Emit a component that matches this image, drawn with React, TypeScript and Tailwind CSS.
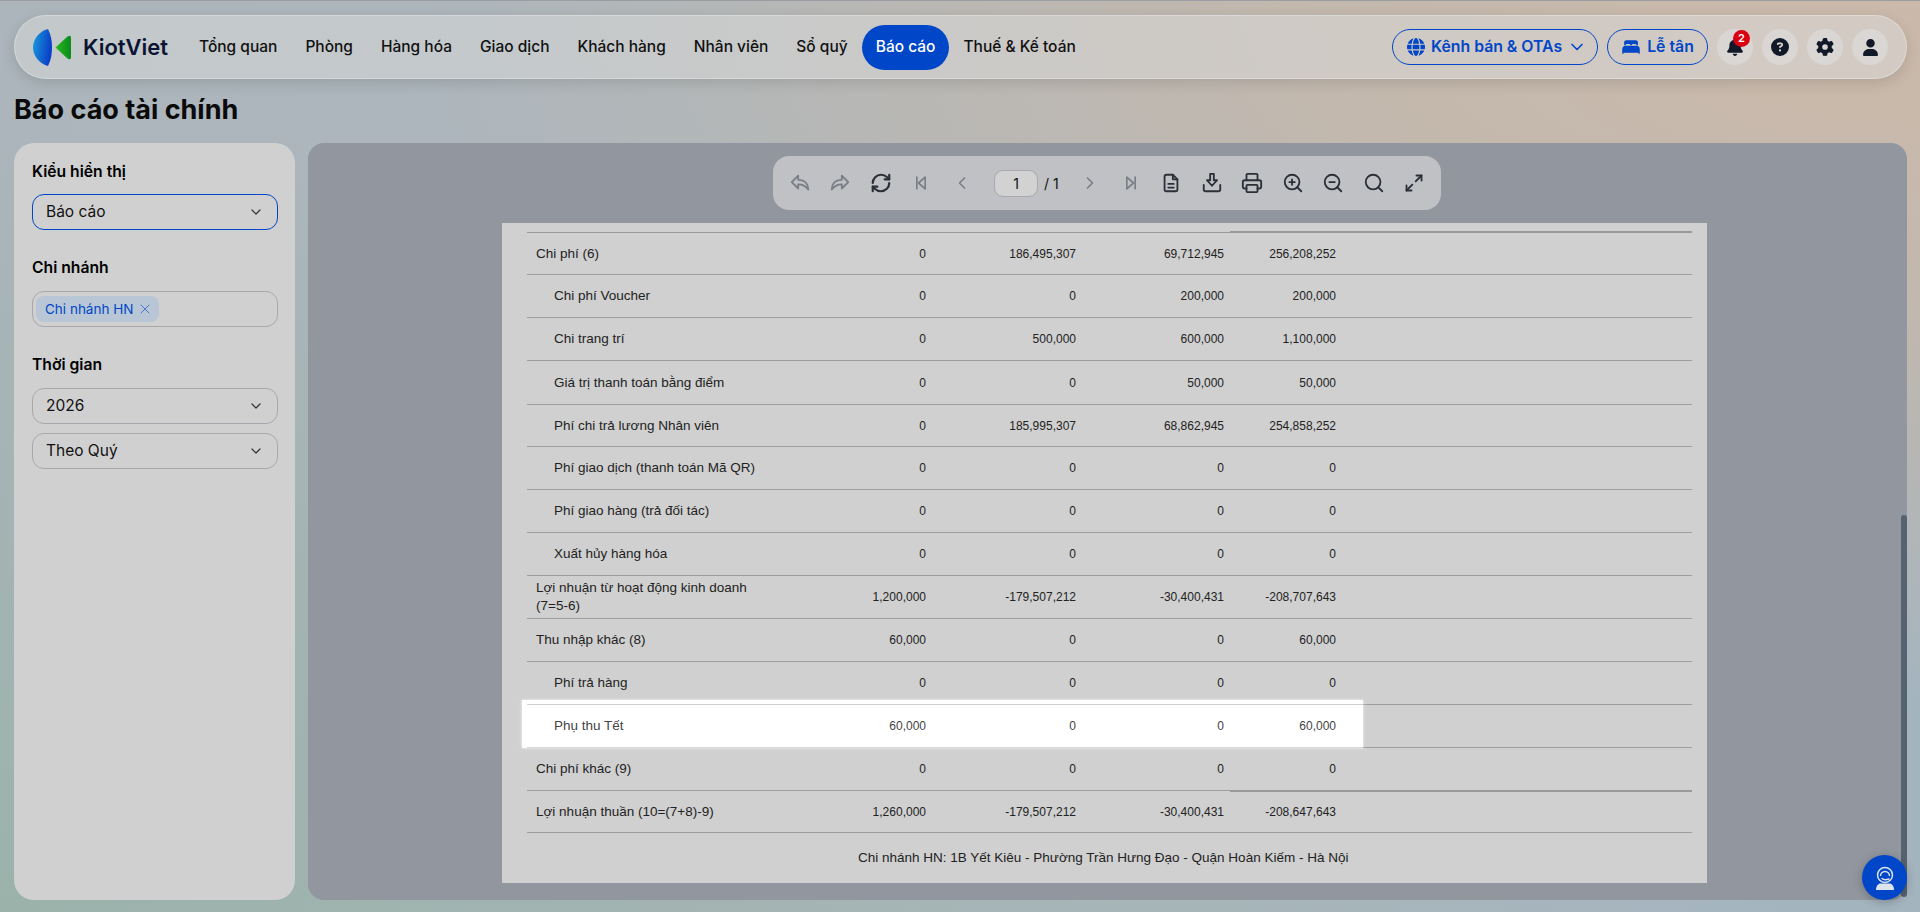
import { ChevronDown, X } from 'lucide-react';
import { FaBell, FaCircleQuestion, FaGear, FaGlobe, FaUser } from 'react-icons/fa6';
import { FiChevronLeft, FiChevronRight } from 'react-icons/fi';
import { IoBed } from 'react-icons/io5';
import { LuMaximize2, LuPrinter, LuRefreshCw, LuSearch, LuZoomIn, LuZoomOut } from 'react-icons/lu';

const nav = ['Tổng quan', 'Phòng', 'Hàng hóa', 'Giao dịch', 'Khách hàng', 'Nhân viên', 'Sổ quỹ'];

type Row = {
  label: string;
  values: string[];
  sub?: boolean;
  h: string;
  hi?: boolean;
  thick?: boolean;
};

const rows: Row[] = [
  { label: 'Chi phí (6)', values: ['0', '186,495,307', '69,712,945', '256,208,252'], h: 'h-[42px]' },
  { label: 'Chi phí Voucher', sub: true, values: ['0', '0', '200,000', '200,000'], h: 'h-[43px]' },
  { label: 'Chi trang trí', sub: true, values: ['0', '500,000', '600,000', '1,100,000'], h: 'h-[43px]' },
  { label: 'Giá trị thanh toán bằng điểm', sub: true, values: ['0', '0', '50,000', '50,000'], h: 'h-[44px]' },
  { label: 'Phí chi trả lương Nhân viên', sub: true, values: ['0', '185,995,307', '68,862,945', '254,858,252'], h: 'h-[42px]' },
  { label: 'Phí giao dịch (thanh toán Mã QR)', sub: true, values: ['0', '0', '0', '0'], h: 'h-[43px]' },
  { label: 'Phí giao hàng (trả đối tác)', sub: true, values: ['0', '0', '0', '0'], h: 'h-[43px]' },
  { label: 'Xuất hủy hàng hóa', sub: true, values: ['0', '0', '0', '0'], h: 'h-[43px]' },
  { label: 'Lợi nhuận từ hoạt động kinh doanh (7=5-6)', values: ['1,200,000', '-179,507,212', '-30,400,431', '-208,707,643'], h: 'h-[43px]' },
  { label: 'Thu nhập khác (8)', values: ['60,000', '0', '0', '60,000'], h: 'h-[43px]' },
  { label: 'Phí trả hàng', sub: true, values: ['0', '0', '0', '0'], h: 'h-[43px]' },
  { label: 'Phụ thu Tết', sub: true, hi: true, values: ['60,000', '0', '0', '60,000'], h: 'h-[43px]' },
  { label: 'Chi phí khác (9)', thick: true, values: ['0', '0', '0', '0'], h: 'h-[43px]' },
  { label: 'Lợi nhuận thuần (10=(7+8)-9)', values: ['1,260,000', '-179,507,212', '-30,400,431', '-208,647,643'], h: 'h-[42px]' },
];

const numCols = ['w-[235px]', 'w-[150px]', 'w-[148px]', 'w-[112px]'];

function KiotVietLogo() {
  return (
    <svg width="38" height="37" viewBox="0 0 38 37" className="shrink-0">
      <defs>
        <linearGradient id="kvBlue" x1="0" y1="0" x2="1" y2="0.25">
          <stop offset="0" stopColor="#1a9ddc" />
          <stop offset="1" stopColor="#0b3fc8" />
        </linearGradient>
        <linearGradient id="kvGreen" x1="0" y1="0" x2="1" y2="0">
          <stop offset="0" stopColor="#2cb81f" />
          <stop offset="1" stopColor="#0a8a1c" />
        </linearGradient>
      </defs>
      <path d="M15 0C5 3 0 11 0 18.500S5 34 15 37C18 31 19 25 19 18.500S18 6 15 0Z" fill="url(#kvBlue)" />
      <path d="M22.500 18.500 34.500 7.500Q38 5.500 38 9V28Q38 31.500 34.500 29.500Z" fill="url(#kvGreen)" />
    </svg>
  );
}

function Select({ value, active }: { value: string; active?: boolean }) {
  return (
    <div
      className={`flex h-9 items-center justify-between rounded-xl border pl-[13px] pr-[13px] text-[15.5px] text-[#111] ${
        active ? 'border-[#0046c8]' : 'border-[#a8a8ae]'
      }`}
    >
      <span>{value}</span>
      <ChevronDown size={16} strokeWidth={1.8} className="text-[#333]" />
    </div>
  );
}

function RoundIcon({ children }: { children: React.ReactNode }) {
  return (
    <div className="relative flex size-9 items-center justify-center rounded-full bg-[#dcdcdc]/70 text-[#111827]">
      {children}
    </div>
  );
}

function ToolIcon({ children, dim }: { children: React.ReactNode; dim?: boolean }) {
  return (
    <div className={`flex w-[40.5px] shrink-0 items-center justify-center ${dim ? 'text-[#7a7e86]' : 'text-[#2b3038]'}`}>
      {children}
    </div>
  );
}

function ToolSvg({ children, size = 22 }: { children: React.ReactNode; size?: number }) {
  return (
    <svg width={size} height={size} viewBox="0 0 24 24" fill="none" stroke="currentColor" strokeWidth="2" strokeLinecap="round" strokeLinejoin="round">
      {children}
    </svg>
  );
}

export default function App() {
  return (
    <div className="flex h-[912px] w-[1920px] flex-col overflow-hidden border-t border-[#9a9ea2] bg-[radial-gradient(ellipse_at_100%_0%,#cbb9aa_0%,#c3b8ad_22%,transparent_55%),radial-gradient(ellipse_at_0%_100%,#9bb2ab_0%,transparent_60%),linear-gradient(100deg,#abb5bb_0%,#aeb7bd_50%,#a3b4bf_100%)] pl-[14px] pr-[13px] pt-[14px] font-['Inter',sans-serif] text-[#111]">
      <header className="flex h-16 shrink-0 items-center rounded-[32px] border border-white/30 bg-[#dcdcdc]/50 pl-[18px] pr-[18px] shadow-[0_4px_14px_rgba(0,0,0,0.12)]">
        <KiotVietLogo />
        <span className="ml-3 text-[22px] font-semibold text-[#0c1433]">KiotViet</span>
        <nav className="ml-[17px] flex items-center text-[15.5px] font-medium text-[#111]">
          {nav.map((n) => (
            <a key={n} className="px-[14px]">
              {n}
            </a>
          ))}
          <a className="flex h-[45px] items-center rounded-full bg-[#0046c8] px-[14px] text-white">Báo cáo</a>
          <a className="px-[14px]">Thuế &amp; Kế toán</a>
        </nav>
        <div className="ml-auto flex items-center gap-[9px]">
          <button className="flex h-9 w-[206px] items-center rounded-full border border-[#0046c8] pl-[14px] text-[15.8px] font-semibold text-[#0046c8]">
            <FaGlobe size={18} />
            <span className="ml-[6px]">Kênh bán &amp; OTAs</span>
            <ChevronDown size={20} strokeWidth={2} className="ml-[5px]" />
          </button>
          <button className="flex h-9 w-[101px] items-center justify-center gap-[6px] rounded-full border border-[#0046c8] text-[15.8px] font-semibold text-[#0046c8]">
            <IoBed size={20} />
            Lễ tân
          </button>
          <RoundIcon>
            <FaBell size={18} />
            <span className="absolute right-[3px] top-px flex size-[17px] items-center justify-center rounded-full bg-[#d90012] text-[11px] font-semibold text-white">
              2
            </span>
          </RoundIcon>
          <RoundIcon>
            <FaCircleQuestion size={18} />
          </RoundIcon>
          <RoundIcon>
            <FaGear size={18} />
          </RoundIcon>
          <RoundIcon>
            <FaUser size={17} />
          </RoundIcon>
        </div>
      </header>

      <h1 className="mt-[15px] h-[49px] text-[27px] font-bold leading-[32px] text-[#0a0a0a]">Báo cáo tài chính</h1>

      <div className="flex h-[757px] gap-[13px]">
        <aside className="w-[281px] shrink-0 rounded-[20px] bg-[#d0d0d0] pl-[18px] pr-[17px] pt-[19px]">
          <div className="text-[15.7px] font-semibold leading-5 text-black">Kiểu hiển thị</div>
          <div className="mt-[12px]">
            <Select value="Báo cáo" active />
          </div>
          <div className="mt-[28px] text-[15.7px] font-semibold leading-5 text-black">Chi nhánh</div>
          <div className="mt-[13px] flex h-9 items-center rounded-xl border border-[#a8a8ae] pl-[3px]">
            <span className="flex h-[26px] items-center gap-[4px] rounded-lg bg-[#b9c6d6] pl-[9px] pr-[6px] text-[13.5px] text-[#0046c8]">
              Chi nhánh HN
              <X size={16} strokeWidth={1.5} className="text-[#4a78c8]" />
            </span>
          </div>
          <div className="mt-[28px] text-[15.7px] font-semibold leading-5 text-black">Thời gian</div>
          <div className="mt-[13px] flex flex-col gap-[9px]">
            <Select value="2026" />
            <Select value="Theo Quý" />
          </div>
        </aside>

        <main className="relative min-w-0 flex-1 rounded-2xl bg-[#92969e]">
          <div className="flex justify-center pt-[13px]">
            <div className="ml-[-2px] flex h-[54px] w-[668px] items-center rounded-2xl bg-[#c0c1c4] pl-[7px]">
              <ToolIcon dim>
                <ToolSvg>
                  <path d="M10 4 3 11l7 7v-4.500c4.500 0 8 1.500 11 5.500 0-6-3.500-10.500-11-10.500Z" />
                </ToolSvg>
              </ToolIcon>
              <ToolIcon dim>
                <ToolSvg>
                  <path d="m14 4 7 7-7 7v-4.500C9.500 13.500 6 15 3 19c0-6 3.500-10.500 11-10.500Z" />
                </ToolSvg>
              </ToolIcon>
              <ToolIcon><LuRefreshCw size={22} strokeWidth={2.4} /></ToolIcon>
              <ToolIcon dim>
                <ToolSvg size={20}>
                  <path d="M7 5v14" />
                  <path d="M17 5 9 12l8 7Z" />
                </ToolSvg>
              </ToolIcon>
              <ToolIcon dim><FiChevronLeft size={20} /></ToolIcon>
              <div className="ml-[12px] flex h-[27px] w-[44px] shrink-0 items-center justify-center rounded-[9px] border border-[#a8a8ae] bg-[#d2d2d2] text-[14px]">1</div>
              <span className="ml-[6px] w-[16px] shrink-0 text-[14px]">/ 1</span>
              <div className="w-[10px] shrink-0" />
              <ToolIcon dim><FiChevronRight size={20} /></ToolIcon>
              <ToolIcon dim>
                <ToolSvg size={20}>
                  <path d="M17 5v14" />
                  <path d="M7 5l8 7-8 7Z" />
                </ToolSvg>
              </ToolIcon>
              <ToolIcon>
                <ToolSvg>
                  <path d="M14 3H7a2 2 0 0 0-2 2v14a2 2 0 0 0 2 2h10a2 2 0 0 0 2-2V8Z" />
                  <path d="M14 3v5h5" />
                  <path d="M9 13h6M9 17h6" />
                </ToolSvg>
              </ToolIcon>
              <ToolIcon>
                <ToolSvg>
                  <path d="M10 2h4v7h3.500L12 15 6.500 9H10Z" />
                  <path d="M3 14v5a2 2 0 0 0 2 2h14a2 2 0 0 0 2-2v-5" />
                </ToolSvg>
              </ToolIcon>
              <ToolIcon><LuPrinter size={22} /></ToolIcon>
              <ToolIcon><LuZoomIn size={22} /></ToolIcon>
              <ToolIcon><LuZoomOut size={22} /></ToolIcon>
              <ToolIcon><LuSearch size={22} /></ToolIcon>
              <ToolIcon><LuMaximize2 size={20} strokeWidth={2.2} /></ToolIcon>
            </div>
          </div>

          <div className="ml-[194px] mt-[13px] h-[660px] w-[1205px] bg-[#d0d0d0] pl-[25px] pr-[15px] pt-[9px] font-['Liberation_Sans',sans-serif] text-[#222]">
            <div className="relative border-t border-[#9a9a9a]">
              <div className="absolute left-[703px] right-0 top-[-2px] h-[2px] bg-[#9a9a9a]" />
              {rows.map((r) => (
                <div
                  key={r.label}
                  className={`relative flex items-center border-b border-[#9f9f9f] ${r.h} ${r.hi ? 'text-[#444]' : ''}`}
                >
                  {r.hi && (
                    <div className="absolute -left-[5px] bottom-[-1px] top-[-5px] w-[841px] bg-white shadow-[0_0_3px_rgba(255,255,255,0.8)]">
                      <div className="absolute left-[5px] right-0 top-[4px] h-px bg-[#d0d0d0]" />
                      <div className="absolute bottom-0 left-[5px] right-0 h-px bg-[#d8d8d8]" />
                    </div>
                  )}
                  <div className={`relative w-[164px] shrink-0 text-[13.5px] leading-[18px] ${r.sub ? 'pl-[27px]' : 'pl-[9px]'}`}>
                    <span className="block w-[220px]">{r.label}</span>
                  </div>
                  {r.values.map((v, i) => (
                    <div key={i} className={`relative ${numCols[i]} shrink-0 text-right text-xs`}>
                      {v}
                    </div>
                  ))}
                  {r.thick && <div className="absolute bottom-[-2px] left-[703px] right-0 h-[2px] bg-[#9a9a9a]" />}
                </div>
              ))}
              <div className="ml-[331px] mt-[15px] text-[13.5px]">
                Chi nhánh HN: 1B Yết Kiêu - Phường Trần Hưng Đạo - Quận Hoàn Kiếm - Hà Nội
              </div>
            </div>
          </div>

          <div className="absolute bottom-[3px] right-0 top-[372px] w-[6px] rounded-full bg-[#566270]" />
          <button className="absolute bottom-0 right-0 flex size-[45px] items-center justify-center rounded-full bg-[#0046c8] shadow-[0_2px_10px_rgba(0,0,0,0.25)]">
            <svg width="24" height="24" viewBox="0 0 24 24" fill="none">
              <circle cx="12" cy="9" r="7.500" stroke="#dfe3ea" strokeWidth="1.500" />
              <path d="M7.500 10a4.500 4.500 0 0 1 9 0" stroke="#dfe3ea" strokeWidth="1.500" />
              <path d="M9 12.500c1.500 1.500 4 1.500 7 .5" stroke="#dfe3ea" strokeWidth="1.500" strokeLinecap="round" />
              <path d="M3 24c0-4 2-6.500 5-6.500h8c3 0 5 2.500 5 6.500Z" fill="#dfe3ea" />
            </svg>
          </button>
        </main>
      </div>
    </div>
  );
}
